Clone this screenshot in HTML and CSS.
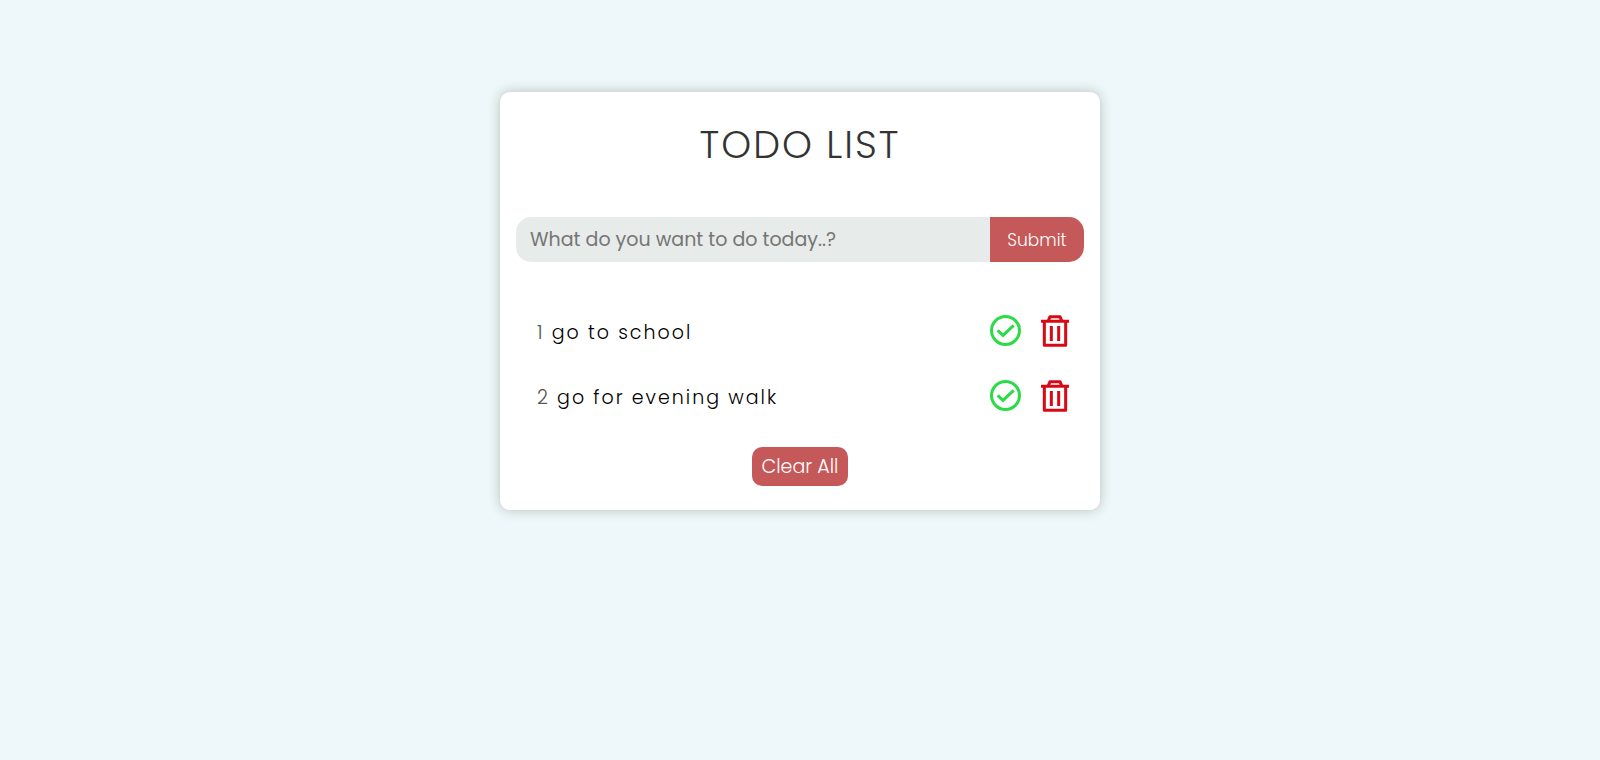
FILE: index.html
```html
<!DOCTYPE html>
<html lang="en">
<head>
<meta charset="utf-8">
<meta name="viewport" content="width=device-width, initial-scale=1">
<title>Todo List</title>
<link rel="stylesheet" href="styles.css">
</head>
<body>
<svg class="icon-defs">
  <symbol id="check" viewBox="0 0 93 93">
    <circle cx="46.500" cy="46.500" r="42" fill="none" stroke="currentColor" stroke-width="9"/>
    <path d="M23 46L39 61L71 31" fill="none" stroke="currentColor" stroke-width="9"/>
  </symbol>
  <symbol id="trash" viewBox="0 0 84 96">
    <path d="M0 19H84M21 19L27 5H57L63 19M10 19V91H74V19M31 33V78M53 33V78" fill="none" stroke="currentColor" stroke-width="9" stroke-linejoin="round"/>
  </symbol>
</svg>
<main class="card">
  <h1 class="title">TODO LIST</h1>
  <form class="entry">
    <input class="entry-input" type="text" aria-label="New task" placeholder="What do you want to do today..?">
    <button class="entry-submit" type="submit">Submit</button>
  </form>
  <ul class="tasks">
    <li class="task">
      <p class="task-text"><span class="task-number">1</span> go to school</p>
      <button class="icon-button done" type="button" aria-label="Complete go to school"><svg class="icon-check"><use href="#check"/></svg></button>
      <button class="icon-button delete" type="button" aria-label="Delete go to school"><svg class="icon-trash"><use href="#trash"/></svg></button>
    </li>
    <li class="task">
      <p class="task-text"><span class="task-number">2</span> go for evening walk</p>
      <button class="icon-button done" type="button" aria-label="Complete go for evening walk"><svg class="icon-check"><use href="#check"/></svg></button>
      <button class="icon-button delete" type="button" aria-label="Delete go for evening walk"><svg class="icon-trash"><use href="#trash"/></svg></button>
    </li>
  </ul>
  <button class="clear" type="button">Clear All</button>
</main>
</body>
</html>
```
FILE: styles.css
```css
* {
  box-sizing: border-box;
  margin: 0;
  padding: 0;
}

body {
  padding: 92px 16px 16px;
  background: #eef7f9;
  font-family: Poppins, Inter, "Open Sans", sans-serif;
  font-weight: 300;
  font-feature-settings: "cv11";
}

button,
input {
  border: 0;
  font: inherit;
  font-feature-settings: inherit;
}

button {
  cursor: pointer;
}

.icon-defs {
  display: none;
}

.card {
  display: flex;
  flex-direction: column;
  max-width: 600px;
  margin: 0 auto;
  padding: 24px 16px;
  border-radius: 10px;
  background: #fff;
  box-shadow: 0 0 12px #b4c1ba;
}

.title {
  margin-bottom: 43px;
  color: #333;
  font-size: 38px;
  font-weight: 300;
  line-height: 58px;
  letter-spacing: 2px;
  text-align: center;
}

.entry {
  display: flex;
  height: 45px;
  margin-bottom: 36px;
}

.entry-input {
  flex: 1;
  min-width: 0;
  padding: 0 14px;
  border-radius: 15px 0 0 15px;
  background: #e7ebe9;
  color: #333;
  font-size: 19px;
  font-weight: 400;
}

.entry-input::placeholder {
  color: #757575;
}

.entry-submit {
  width: 94px;
  border-radius: 0 15px 15px 0;
  background: #c55859;
  color: #fff;
  font-size: 17px;
}

.tasks {
  margin-bottom: 19px;
  list-style: none;
}

.task {
  display: flex;
  align-items: center;
  height: 65px;
  padding: 0 15px 0 21px;
}

.task-text {
  flex: 1;
  padding-top: 4px;
  color: #000;
  font-size: 19px;
  font-weight: 300;
  letter-spacing: 2px;
}

.task-number {
  color: #555;
}

.icon-button {
  display: flex;
  background: none;
}

.done {
  margin-right: 20px;
  color: #2ddb48;
}

.delete {
  color: #d90914;
}

.icon-check {
  width: 31px;
  height: 31px;
}

.icon-trash {
  width: 28px;
  height: 32px;
}

.clear {
  align-self: center;
  width: 96px;
  height: 39px;
  border-radius: 10px;
  background: #c55859;
  color: #fff;
  font-size: 19px;
}
```
